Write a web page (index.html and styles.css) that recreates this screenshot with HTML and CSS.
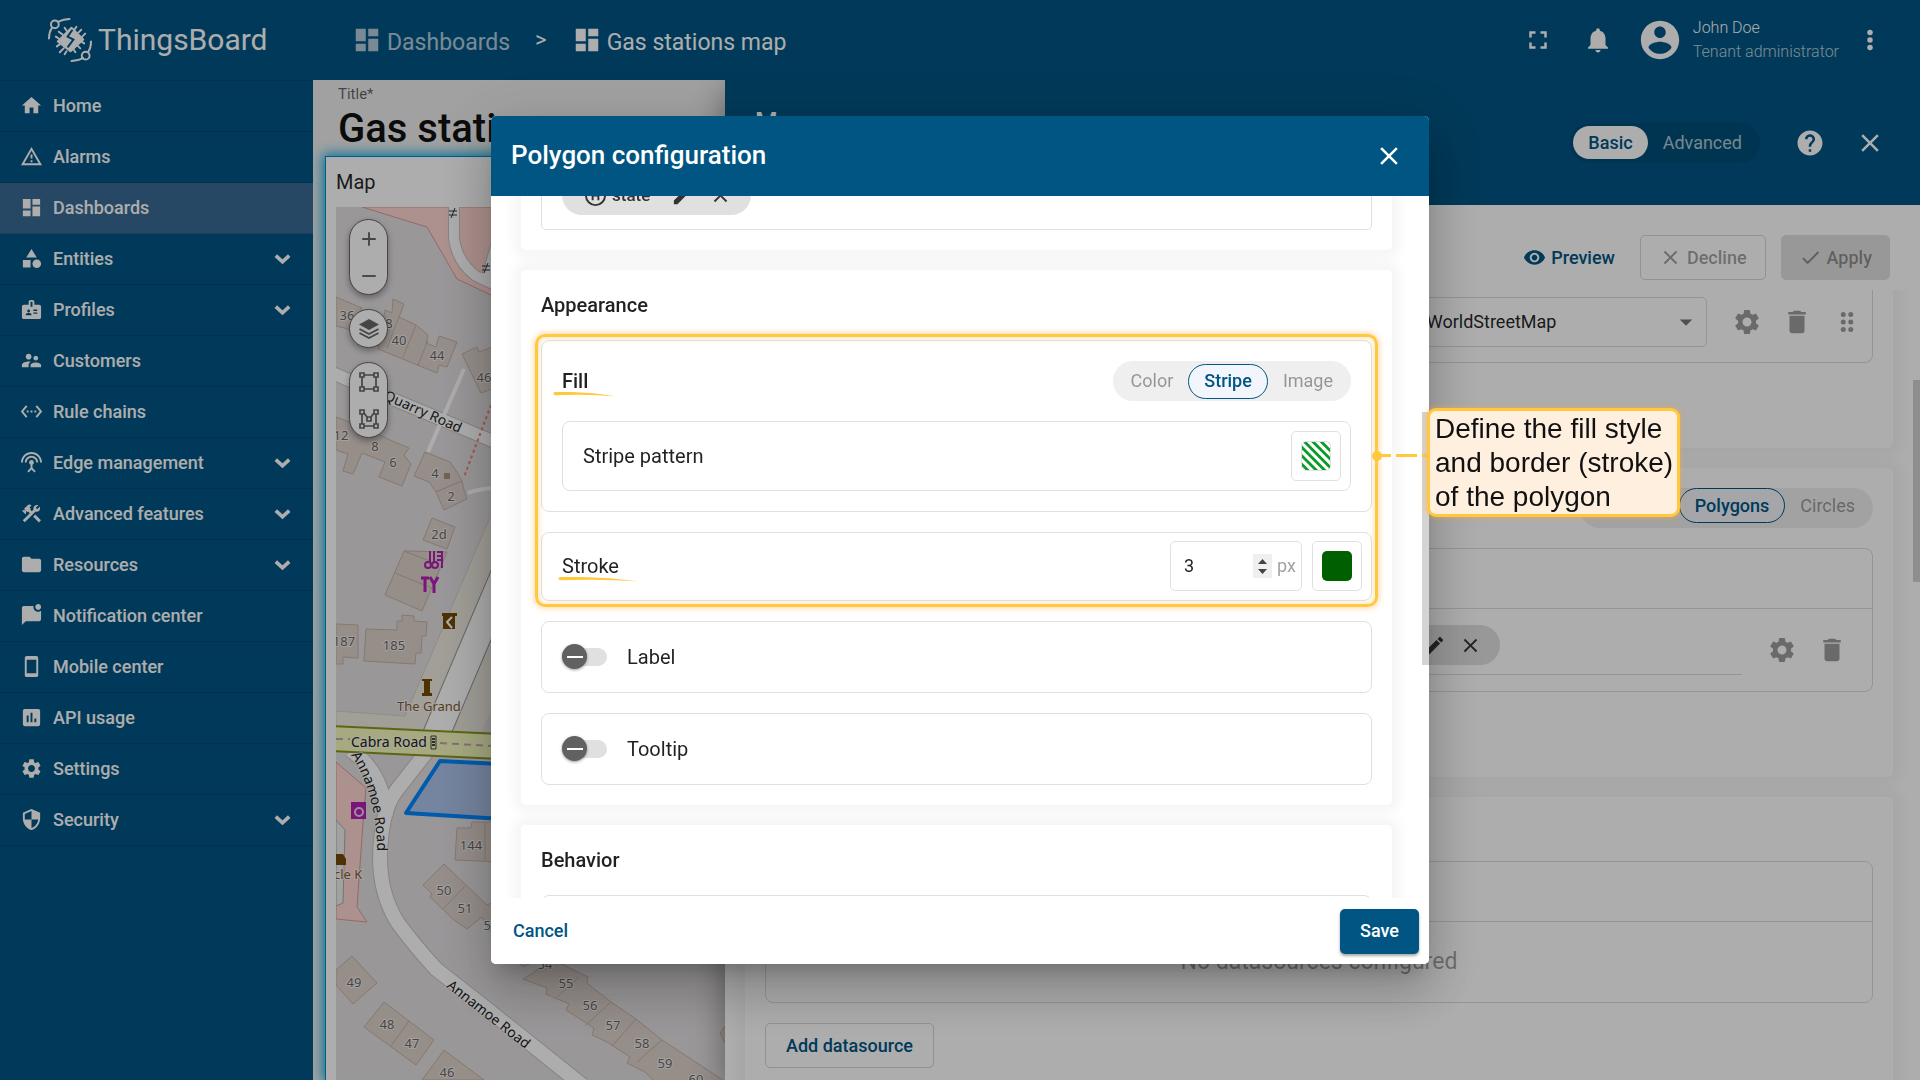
FILE: index.html
```html
<!DOCTYPE html>
<html lang="en">
<head>
<meta charset="utf-8">
<title>ThingsBoard | Gas stations map</title>
<link rel="stylesheet" href="styles.css">
</head>
<body>
<svg class="sprite" aria-hidden="true">
  <symbol id="i-home" viewBox="0 0 24 24"><path d="M10 20v-6h4v6h5v-8h3L12 3 2 12h3v8z"/></symbol>
  <symbol id="i-alarm" viewBox="0 0 24 24"><path d="M12 5.99L19.53 19H4.47L12 5.99M12 2L1 21h22L12 2zm1 14h-2v2h2v-2zm0-6h-2v4h2v-4z"/></symbol>
  <symbol id="i-dashboard" viewBox="0 0 24 24"><path d="M3 13h8V3H3v10zm0 8h8v-6H3v6zm10 0h8V11h-8v10zm0-18v6h8V3h-8z"/></symbol>
  <symbol id="i-entities" viewBox="0 0 24 24"><path d="M12 2l-5.500 9h11zM3 13.500h8v8H3z"/><circle cx="17.500" cy="17.500" r="4.500"/></symbol>
  <symbol id="i-badge" viewBox="0 0 24 24"><path d="M20 7h-5V4c0-1.100-.9-2-2-2h-2c-1.100 0-2 .9-2 2v3H4c-1.100 0-2 .9-2 2v11c0 1.100.9 2 2 2h16c1.100 0 2-.9 2-2V9c0-1.100-.9-2-2-2zM9 12c.83 0 1.500.67 1.500 1.500S9.830 15 9 15s-1.500-.67-1.500-1.500S8.170 12 9 12zm3 6H6v-.75c0-1 2-1.500 3-1.500s3 .5 3 1.500V18zm1-9h-2V4h2v5zm5 7.500h-4V15h4v1.500zm0-3h-4V12h4v1.500z"/></symbol>
  <symbol id="i-people" viewBox="0 0 24 24"><path d="M16.500 12c1.380 0 2.490-1.120 2.490-2.500S17.880 7 16.500 7C15.120 7 14 8.120 14 9.500s1.120 2.500 2.500 2.500zM9 11c1.660 0 2.990-1.340 2.990-3S10.660 5 9 5C7.340 5 6 6.340 6 8s1.340 3 3 3zm7.500 3c-1.830 0-5.500.92-5.500 2.750V19h11v-2.250c0-1.830-3.670-2.750-5.500-2.750zM9 13c-2.330 0-7 1.170-7 3.500V19h7v-2.250c0-.85.33-2.340 2.370-3.470C10.500 13.100 9.660 13 9 13z"/></symbol>
  <symbol id="i-chains" viewBox="0 0 24 24"><path d="M7.770 6.760L6.230 5.480.82 12l5.410 6.520 1.540-1.280L3.420 12l4.350-5.240zM7 13h2v-2H7v2zm10-2h-2v2h2v-2zm-6 2h2v-2h-2v2zm6.770-7.520l-1.540 1.280L20.580 12l-4.350 5.240 1.540 1.280L23.180 12l-5.410-6.520z"/></symbol>
  <symbol id="i-antenna" viewBox="0 0 24 24"><path d="M12 5c-3.870 0-7 3.130-7 7h2c0-2.760 2.240-5 5-5s5 2.240 5 5h2c0-3.870-3.130-7-7-7zm1 9.290c.88-.39 1.500-1.260 1.500-2.290 0-1.380-1.120-2.500-2.500-2.500S9.500 10.620 9.500 12c0 1.020.62 1.900 1.500 2.290v3.300L7.590 21 9 22.410l3-3 3 3L16.410 21 13 17.590v-3.300zM12 1C5.930 1 1 5.930 1 12h2c0-4.970 4.030-9 9-9s9 4.030 9 9h2c0-6.070-4.930-11-11-11z"/></symbol>
  <symbol id="i-tools" viewBox="0 0 24 24"><path d="M13.780 15.300l6 6 2.110-2.160-6-6-2.110 2.160zm3.720-5.160c-.39 0-.81-.05-1.140-.19L4.970 21.250 2.860 19.140l7.410-7.400L8.500 9.960l-.72.7-1.450-1.410v2.860l-.7.7-3.520-3.560.7-.7h2.810l-1.400-1.410 3.560-3.560c1.170-1.170 3.050-1.170 4.220 0L9.920 5.660l1.410 1.410-.7.7 1.790 1.780 1.830-1.880c-.14-.33-.19-.75-.19-1.140 0-1.930 1.550-3.520 3.490-3.520.61 0 1.120.14 1.590.42l-2.680 2.680 1.450 1.450 2.680-2.680c.28.47.42.98.42 1.590-.01 1.970-1.550 3.530-3.510 3.670z"/></symbol>
  <symbol id="i-folder" viewBox="0 0 24 24"><path d="M10 4H4c-1.100 0-2 .9-2 2v12c0 1.100.9 2 2 2h16c1.100 0 2-.9 2-2V8c0-1.100-.9-2-2-2h-8l-2-2z"/></symbol>
  <symbol id="i-chat" viewBox="0 0 24 24"><path d="M22 6.980V16c0 1.100-.9 2-2 2H6l-4 4V4c0-1.100.9-2 2-2h10.100c-.06.32-.1.66-.1 1 0 2.760 2.240 5 5 5 1.130 0 2.160-.39 3-1.020zM16 3c0 1.660 1.340 3 3 3s3-1.340 3-3-1.340-3-3-3-3 1.340-3 3z"/></symbol>
  <symbol id="i-phone" viewBox="0 0 24 24"><path d="M17 1H7c-1.100 0-2 .9-2 2v18c0 1.100.9 2 2 2h10c1.100 0 2-.9 2-2V3c0-1.100-.9-2-2-2zM17 19H7V5h10v14z"/></symbol>
  <symbol id="i-chart" viewBox="0 0 24 24"><path d="M19 3H5c-1.100 0-2 .9-2 2v14c0 1.100.9 2 2 2h14c1.100 0 2-.9 2-2V5c0-1.100-.9-2-2-2zM9 17H7v-7h2v7zm4 0h-2V7h2v10zm4 0h-2v-4h2v4z"/></symbol>
  <symbol id="i-gear" viewBox="0 0 24 24"><path d="M19.140 12.940c.04-.3.06-.61.06-.94 0-.32-.02-.64-.07-.94l2.030-1.580c.18-.14.23-.41.12-.61l-1.920-3.320c-.12-.22-.37-.29-.59-.22l-2.390.96c-.5-.38-1.030-.7-1.620-.94l-.36-2.540c-.04-.24-.24-.41-.48-.41h-3.840c-.24 0-.43.17-.47.41l-.36 2.540c-.59.24-1.130.57-1.620.94l-2.390-.96c-.22-.08-.47 0-.59.22L2.740 8.870c-.12.21-.08.47.12.61l2.030 1.580c-.05.3-.09.63-.09.94s.02.64.07.94l-2.030 1.580c-.18.14-.23.41-.12.61l1.920 3.320c.12.22.37.29.59.22l2.390-.96c.5.38 1.030.7 1.620.94l.36 2.540c.05.24.24.41.48.41h3.840c.24 0 .44-.17.47-.41l.36-2.540c.59-.24 1.130-.56 1.620-.94l2.390.96c.22.08.47 0 .59-.22l1.920-3.320c.12-.22.07-.47-.12-.61l-2.010-1.580zM12 15.600c-1.980 0-3.600-1.620-3.600-3.600s1.620-3.600 3.600-3.600 3.600 1.620 3.600 3.600-1.620 3.600-3.600 3.600z"/></symbol>
  <symbol id="i-shield" viewBox="0 0 24 24"><path d="M12 1L3 5v6c0 5.550 3.840 10.740 9 12 5.160-1.260 9-6.450 9-12V5l-9-4zm0 10.990h7c-.53 4.120-3.280 7.790-7 8.940V12H5V6.300l7-3.110v8.800z"/></symbol>
  <symbol id="i-chevron" viewBox="0 0 24 24"><path d="M5 9l7 6.500L19 9" fill="none" stroke="currentColor" stroke-width="3.800"/></symbol>
  <symbol id="i-fullscreen" viewBox="0 0 24 24"><path d="M7 14H5v5h5v-2H7v-3zm-2-4h2V7h3V5H5v5zm12 7h-3v2h5v-5h-2v3zM14 5v2h3v3h2V5h-5z"/></symbol>
  <symbol id="i-bell" viewBox="0 0 24 24"><path d="M12 22c1.100 0 2-.9 2-2h-4c0 1.100.89 2 2 2zm6-6v-5c0-3.070-1.640-5.640-4.500-6.320V4c0-.83-.67-1.500-1.500-1.500s-1.500.67-1.500 1.500v.68C7.630 5.360 6 7.920 6 11v5l-2 2v1h16v-1l-2-2z"/></symbol>
  <symbol id="i-account" viewBox="0 0 24 24"><path d="M12 2C6.480 2 2 6.480 2 12s4.480 10 10 10 10-4.480 10-10S17.520 2 12 2zm0 3c1.660 0 3 1.340 3 3s-1.340 3-3 3-3-1.340-3-3 1.340-3 3-3zm0 14.200c-2.500 0-4.710-1.280-6-3.220.03-1.990 4-3.080 6-3.080 1.990 0 5.970 1.090 6 3.080-1.290 1.940-3.500 3.220-6 3.220z"/></symbol>
  <symbol id="i-more" viewBox="0 0 24 24"><circle cx="12" cy="6" r="2.200"/><circle cx="12" cy="12" r="2.200"/><circle cx="12" cy="18" r="2.200"/></symbol>
  <symbol id="i-help" viewBox="0 0 24 24"><path d="M12 2C6.480 2 2 6.480 2 12s4.480 10 10 10 10-4.480 10-10S17.520 2 12 2zm1 17h-2v-2h2v2zm2.070-7.750l-.9.920C13.450 12.900 13 13.500 13 15h-2v-.5c0-1.100.45-2.100 1.170-2.830l1.240-1.260c.37-.36.59-.86.59-1.410 0-1.100-.9-2-2-2s-2 .9-2 2H8c0-2.210 1.790-4 4-4s4 1.790 4 4c0 .88-.36 1.680-.93 2.250z"/></symbol>
  <symbol id="i-close" viewBox="0 0 24 24"><path d="M19 6.410L17.590 5 12 10.590 6.410 5 5 6.410 10.590 12 5 17.590 6.410 19 12 13.410 17.590 19 19 17.590 13.410 12z"/></symbol>
  <symbol id="i-eye" viewBox="0 0 24 24"><path d="M12 4.500C7 4.500 2.730 7.610 1 12c1.730 4.390 6 7.500 11 7.500s9.270-3.110 11-7.500c-1.730-4.390-6-7.500-11-7.500zM12 17c-2.760 0-5-2.240-5-5s2.240-5 5-5 5 2.240 5 5-2.240 5-5 5zm0-8c-1.660 0-3 1.340-3 3s1.340 3 3 3 3-1.340 3-3-1.340-3-3-3z"/></symbol>
  <symbol id="i-check" viewBox="0 0 24 24"><path d="M9 16.170L4.830 12l-1.420 1.410L9 19 21 7l-1.410-1.410z"/></symbol>
  <symbol id="i-trash" viewBox="0 0 24 24"><path d="M6 19c0 1.100.9 2 2 2h8c1.100 0 2-.9 2-2V7H6v12zM19 4h-3.500l-1-1h-5l-1 1H5v2h14V4z"/></symbol>
  <symbol id="i-drag" viewBox="0 0 24 24"><circle cx="9" cy="6" r="2"/><circle cx="15" cy="6" r="2"/><circle cx="9" cy="12" r="2"/><circle cx="15" cy="12" r="2"/><circle cx="9" cy="18" r="2"/><circle cx="15" cy="18" r="2"/></symbol>
  <symbol id="i-edit" viewBox="0 0 24 24"><path d="M3 17.250V21h3.750L17.810 9.940l-3.750-3.750L3 17.250zM20.710 7.040c.39-.39.39-1.020 0-1.410l-2.340-2.340c-.39-.39-1.020-.39-1.410 0l-1.830 1.830 3.750 3.750 1.830-1.830z"/></symbol>
  <symbol id="i-layers" viewBox="0 0 24 24"><path d="M12 2l10 5.500-10 5.500L2 7.500z"/><path d="M2.500 12l9.500 5 9.500-5M2.500 16l9.500 5 9.500-5" fill="none" stroke="currentColor" stroke-width="1.800"/></symbol>
  <symbol id="i-rect" viewBox="0 0 24 24"><path d="M5 7v10M19 7v10M7 5h10M7 19h10M3 3h4v4H3zM17 3h4v4h-4zM3 17h4v4H3zM17 17h4v4h-4z" fill="none" stroke="currentColor" stroke-width="1.700"/></symbol>
  <symbol id="i-poly" viewBox="0 0 24 24"><path d="M5 7v10M19 7v10M7 19h10M7 6l3 4M17 6l-3 4M3 3h4v4H3zM17 3h4v4h-4zM3 17h4v4H3zM17 17h4v4h-4zM10 10h4v4h-4z" fill="none" stroke="currentColor" stroke-width="1.700"/></symbol>
  <symbol id="i-plus" viewBox="0 0 24 24"><path d="M12 3v18M3 12h18" fill="none" stroke="currentColor" stroke-width="2.500"/></symbol>
  <symbol id="i-minus" viewBox="0 0 24 24"><path d="M3 12h18" fill="none" stroke="currentColor" stroke-width="2.500"/></symbol>
  <symbol id="i-caret" viewBox="0 0 24 24"><path d="M7 10l5 5 5-5z"/></symbol>
  <symbol id="i-function" viewBox="0 0 24 24"><circle cx="12" cy="12" r="10" fill="none" stroke="currentColor" stroke-width="2"/><path d="M9 7v10M15 7v10M9 12h6" fill="none" stroke="currentColor" stroke-width="2"/></symbol>
  <symbol id="i-logo" viewBox="0 0 46 46">
    <g fill="none" stroke="currentColor" stroke-width="2" stroke-linecap="round">
      <path d="M1 21c0-4 1-8 3-11M10 4c4-2 8-3 12-3M44 24c0 4-1 8-3 11M36 41c-4 2-8 3-12 3"/>
      <circle cx="7" cy="6.500" r="4"/><circle cx="38.500" cy="38.500" r="4"/>
      <path d="M27 12l2-3M31 15l3-3M35 19l3-3M34 24l3 2M30 28l3 3M26 32l2 3M19 13l-2-3M15 17l-4-3M11 21l-3-2M12 27l-3 2M16 31l-4 4M19 34l-2 3"/>
    </g>
    <path d="M24 10l12 12-13 12L10 24z" stroke="currentColor" stroke-width="2" stroke-linejoin="round"/>
    <path d="M25 12l-5 7 6 3-6 8" fill="none" stroke="#005583" stroke-width="2"/>
  </symbol>
</svg>

<div class="app">
  <nav class="sidebar" aria-label="Main menu">
    <a class="brand" href="#"><svg class="brand-mark"><use href="#i-logo"/></svg><span>ThingsBoard</span></a>
    <ul class="menu">
      <li><a href="#"><svg class="icon"><use href="#i-home"/></svg><span>Home</span></a></li>
      <li><a href="#"><svg class="icon"><use href="#i-alarm"/></svg><span>Alarms</span></a></li>
      <li><a class="active" href="#"><svg class="icon"><use href="#i-dashboard"/></svg><span>Dashboards</span></a></li>
      <li><a href="#"><svg class="icon"><use href="#i-entities"/></svg><span>Entities</span><svg class="chevron"><use href="#i-chevron"/></svg></a></li>
      <li><a href="#"><svg class="icon"><use href="#i-badge"/></svg><span>Profiles</span><svg class="chevron"><use href="#i-chevron"/></svg></a></li>
      <li><a href="#"><svg class="icon"><use href="#i-people"/></svg><span>Customers</span></a></li>
      <li><a href="#"><svg class="icon"><use href="#i-chains"/></svg><span>Rule chains</span></a></li>
      <li><a href="#"><svg class="icon"><use href="#i-antenna"/></svg><span>Edge management</span><svg class="chevron"><use href="#i-chevron"/></svg></a></li>
      <li><a href="#"><svg class="icon"><use href="#i-tools"/></svg><span>Advanced features</span><svg class="chevron"><use href="#i-chevron"/></svg></a></li>
      <li><a href="#"><svg class="icon"><use href="#i-folder"/></svg><span>Resources</span><svg class="chevron"><use href="#i-chevron"/></svg></a></li>
      <li><a href="#"><svg class="icon"><use href="#i-chat"/></svg><span>Notification center</span></a></li>
      <li><a href="#"><svg class="icon"><use href="#i-phone"/></svg><span>Mobile center</span></a></li>
      <li><a href="#"><svg class="icon"><use href="#i-chart"/></svg><span>API usage</span></a></li>
      <li><a href="#"><svg class="icon"><use href="#i-gear"/></svg><span>Settings</span></a></li>
      <li><a href="#"><svg class="icon"><use href="#i-shield"/></svg><span>Security</span><svg class="chevron"><use href="#i-chevron"/></svg></a></li>
    </ul>
  </nav>

  <div class="main">
    <header class="topbar">
      <div class="crumbs">
        <a class="crumb parent" href="#"><svg class="icon-l"><use href="#i-dashboard"/></svg><span>Dashboards</span></a>
        <span class="crumb-sep">&gt;</span>
        <a class="crumb" href="#"><svg class="icon-l"><use href="#i-dashboard"/></svg><span>Gas stations map</span></a>
      </div>
      <div class="top-actions">
        <button class="icon-btn" aria-label="Full screen"><svg class="icon-l"><use href="#i-fullscreen"/></svg></button>
        <button class="icon-btn" aria-label="Notifications"><svg class="icon-l"><use href="#i-bell"/></svg></button>
        <div class="user">
          <svg class="avatar"><use href="#i-account"/></svg>
          <div class="user-text"><span>John Doe</span><span class="role">Tenant administrator</span></div>
        </div>
        <button class="icon-btn" aria-label="More"><svg class="icon-l"><use href="#i-more"/></svg></button>
      </div>
    </header>

    <div class="workspace">
      <section class="dashboard">
        <div class="title-bar">
          <label for="dash-title">Title*</label>
          <input id="dash-title" value="Gas stations map">
        </div>
        <div class="widget">
          <h2>Map</h2>
          <div class="map">
            <svg class="map-canvas">
              <g transform="translate(-336 -207)">
                <path class="retail" d="M362 207l65 20 30 52 34 16h40v-88z"/>
                <path class="road-case" stroke-width="12" d="M454 200v38q3 24 22 38l34 16M502 225l-16 56"/>
                <path class="road" stroke-width="10" d="M454 200v38q3 24 22 38l34 16M502 225l-16 56"/>
                <path class="gate" d="M449 211h8M449 215h8M455 208l-4 10M482 266h8M482 270h8M488 263l-4 10"/>
                <path class="verge" d="M491 515l-86 201-69-5v40h170v-240z"/>
                <path class="grey-case" stroke-width="28" d="M506 570l-70 165"/>
                <path class="road" stroke-width="26" d="M506 570l-70 165"/>
                <path class="ground" d="M500 690l-20 45h30z"/>
                <g class="building">
                  <path d="M336 297l26 11-10 22-16-4z"/>
                  <path d="M393 299l11 5-5 13 17 8 12 10-2 8 10 4 3-11 18 6-10 25-8-2-2 8-59-24 7-39 7 3z"/>
                  <path d="M399 317l-12 31M416 325l-13 32M428 340l-10 25"/>
                  <path d="M462 354l15-7 2 5 21-8v42l-19 7z"/>
                  <path d="M336 417l29 11 25 12 19 8-5 7 7 9-9 22-23-9 6-15-23-9-9 21-10-3 5-17-12-4z"/>
                  <path d="M425 452l25 10 7 10 5 9-26 11-7-10-15-6z"/>
                  <path d="M462 481l-26 11 8 18 23-11-3-9z"/>
                  <path d="M432 518l23 9-8 22-24-9z"/>
                  <path d="M404 551l43 1-25 59-37-16zM395 573l37 15M404 551l36 14"/>
                  <path d="M336 624l22 1v33l-15-1v7h-7z"/>
                  <path d="M366 629l31 1v-9h5v-6l12 1v5l13 1-1 14h-4l-1 17h-5l-1 11-51-3z"/>
                  <path d="M472 822h30v40l-47-2 2-32h14zM485 822v38"/>
                  <path d="M444 864l43 41 13-6 40 60-17 8-33-36-8-14-15 12-13-9-24-23 2-3-9-9zM465 886l-22 23"/>
                  <path d="M553 960l35 17-1 6 24 19 25 17 26 21 26 17 35 23v10h-60l-18-18-18-9 3-6-23-15-15-7 2-7-28-18 3-6-23-10 1-6-24-9zM579 977l-22 20M611 1002l-26 24M636 1019l-24 27M662 1040l-25 22"/>
                  <path d="M720 1033l6-8v20z"/>
                  <path d="M352 956l25 27-24 21-17-19v-15z"/>
                  <path d="M384 1002l50 38-18 25-52-38zM409 1021l-18 25"/>
                  <path d="M444 1050l40 30h-62z"/>
                </g>
                <path class="road-case" stroke-width="14" d="M330 372l60 26 110 46"/>
                <path class="road" stroke-width="12" d="M330 372l60 26 110 46"/>
                <path class="road" stroke-width="4" d="M464 369l-36 83M468 493q10-4 25-5M428 452l6-14"/>
                <path class="foot" d="M491 405l-27 72"/>
                <path d="M444 473h6v6h-6z" fill="#a98f80"/>
                <path class="retail" d="M336 762l30 26-3 35-6 84 10 15-31-3z"/>
                <path class="plaza" d="M336 820l9 10-2 73-7 3z"/>
                <path class="road-case" stroke-width="16" d="M350 750q32 20 36 66M432 745l-36 46q-15 20-16 66 0 38 18 66 16 22 38 46l46 36 100 80"/>
                <path class="road" stroke-width="14" d="M350 750q32 20 36 66M432 745l-36 46q-15 20-16 66 0 38 18 66 16 22 38 46l46 36 100 80"/>
                <path class="cabra" d="M330 726l170 8v25l-170-8z"/>
                <path class="cabra-dash" d="M336 739h14M440 743l51 3"/>
                <path class="area" d="M440 761l80 4v55l-114-7z"/>
                <g class="shop">
                  <path d="M430 551v11M434 551v11M437 552h6M437 556h6M437 560h6M442 551v17"/>
                  <circle cx="428" cy="565" r="3"/><circle cx="435" cy="565" r="3"/>
                  <path d="M421 578h8M425 578v14" stroke-width="3"/><path d="M434 584v9M430 577l4 7 4-7" stroke-width="3"/>
                </g>
                <path d="M351 802h15v17h-15z" fill="#b41fb4"/><circle cx="359" cy="812" r="4" fill="none" stroke="#eecdee" stroke-width="2"/>
                <path d="M442 613h15v3h-2v13h-12v-13h-1zM422 679h10v2h-2v12h2v3h-10v-3h2v-12h-2zM336 854h7l3 5v6h-10z" fill="#734a08"/>
                <path d="M452 617l-5 5 5 6" fill="none" stroke="#fff" stroke-width="2"/>
                <g class="num">
                  <text x="347" y="320">36</text><text x="389" y="328">8</text><text x="399" y="345">40</text><text x="437" y="360">44</text><text x="484" y="382">46</text>
                  <text x="341" y="440">12</text><text x="375" y="451">8</text><text x="393" y="467">6</text><text x="435" y="478">4</text><text x="451" y="501">2</text><text x="439" y="539">2d</text>
                  <text x="344" y="646">187</text><text x="394" y="650">185</text><text x="471" y="850">144</text><text x="444" y="895">50</text><text x="465" y="913">51</text><text x="491" y="930">52</text>
                  <text x="545" y="969">54</text><text x="566" y="988">55</text><text x="590" y="1010">56</text><text x="613" y="1030">57</text><text x="642" y="1048">58</text><text x="665" y="1068">59</text><text x="696" y="1084">60</text>
                  <text x="354" y="987">49</text><text x="387" y="1029">48</text><text x="412" y="1048">47</text><text x="447" y="1077">46</text>
                </g>
                <g class="street">
                  <text transform="translate(383 399) rotate(24)">Quarry Road</text>
                  <text x="351" y="747">Cabra Road</text>
                  <path id="annamoe-a" d="M351 755Q374 790 377 842V880" fill="none"/>
                  <text><textPath href="#annamoe-a">Annamoe Road</textPath></text>
                  <text transform="translate(446 987) rotate(38)">Annamoe Road</text>
                </g>
                <g class="poi"><text x="397" y="711">The Grand</text><text x="334" y="879">cle K</text></g>
                <path d="M431 736h5v13h-5z" fill="none" stroke="#444"/><path d="M432 739h3M432 742h3M432 745h3" stroke="#444" stroke-width="2"/>
              </g>
            </svg>
            <div class="map-tools">
              <div class="map-group"><button aria-label="Zoom in"><svg><use href="#i-plus"/></svg></button><button aria-label="Zoom out"><svg><use href="#i-minus"/></svg></button></div>
              <div class="map-group"><button aria-label="Layers"><svg class="wide"><use href="#i-layers"/></svg></button></div>
              <div class="map-group"><button aria-label="Draw rectangle"><svg class="wide"><use href="#i-rect"/></svg></button><button aria-label="Draw polygon"><svg class="wide"><use href="#i-poly"/></svg></button></div>
            </div>
          </div>
        </div>
      </section>

      <aside class="editor">
        <header class="editor-head">
          <div class="editor-title"><h2>Map</h2><p>Maps</p></div>
          <fieldset class="seg seg-dark">
            <label class="on"><input type="radio" name="mode" checked>Basic</label>
            <label><input type="radio" name="mode">Advanced</label>
          </fieldset>
          <button class="icon-btn" aria-label="Help"><svg class="icon-l"><use href="#i-help"/></svg></button>
          <button class="icon-btn" aria-label="Close editor"><svg class="icon-l"><use href="#i-close"/></svg></button>
        </header>
        <div class="editor-actions">
          <button class="btn text-btn"><svg class="icon"><use href="#i-eye"/></svg>Preview</button>
          <button class="btn outlined muted" disabled><svg class="icon"><use href="#i-close"/></svg>Decline</button>
          <button class="btn filled muted" disabled><svg class="icon"><use href="#i-check"/></svg>Apply</button>
        </div>
        <div class="editor-body">
          <section class="card card-layers">
            <div class="layer-row">
              <div class="select"><select aria-label="Layer"><option>Esri.WorldStreetMap</option></select><svg class="icon-l"><use href="#i-caret"/></svg></div>
              <button class="icon-btn" aria-label="Layer settings"><svg class="icon-l"><use href="#i-gear"/></svg></button>
              <button class="icon-btn" aria-label="Delete layer"><svg class="icon-l"><use href="#i-trash"/></svg></button>
              <button class="icon-btn" aria-label="Reorder layer"><svg class="icon-l"><use href="#i-drag"/></svg></button>
            </div>
          </section>
          <section class="card card-overlays">
            <fieldset class="seg">
              <label><input type="radio" name="overlay">Markers</label>
              <label class="on"><input type="radio" name="overlay" checked>Polygons</label>
              <label><input type="radio" name="overlay">Circles</label>
            </fieldset>
            <div class="grid-box">
              <div class="grid-head"></div>
              <div class="overlay-row">
                <div class="key-field">
                  <span class="chip"><span>perimeter</span><svg class="icon"><use href="#i-edit"/></svg><svg class="icon"><use href="#i-close"/></svg></span>
                </div>
                <button class="icon-btn" aria-label="Polygon settings"><svg class="icon-l"><use href="#i-gear"/></svg></button>
                <button class="icon-btn" aria-label="Delete polygon"><svg class="icon-l"><use href="#i-trash"/></svg></button>
              </div>
            </div>
          </section>
          <section class="card card-sources">
            <div class="grid-box">
              <div class="grid-head"></div>
              <p class="empty">No datasources configured</p>
            </div>
            <button class="btn outlined">Add datasource</button>
          </section>
          <div class="editor-thumb"></div>
        </div>
      </aside>
    </div>
  </div>
</div>

<div class="backdrop">
  <div class="dialog" role="dialog" aria-labelledby="dlg-title">
    <header class="dialog-head">
      <h1 id="dlg-title">Polygon configuration</h1>
      <button class="icon-btn" aria-label="Close"><svg class="icon-l"><use href="#i-close"/></svg></button>
    </header>
    <div class="dialog-body">
      <section class="card card-key">
        <div class="key-box"><span class="chip"><svg class="icon"><use href="#i-function"/></svg><span>state</span><svg class="icon"><use href="#i-edit"/></svg><svg class="icon"><use href="#i-close"/></svg></span></div>
      </section>
      <section class="card">
        <h3>Appearance</h3>
        <div class="marked">
          <div class="box fill-box">
            <div class="row">
              <h4 class="underlined">Fill<svg class="swoosh short" viewBox="0 0 80 6" preserveAspectRatio="none"><path d="M2 0Q40-1 80 5Q40 2 2 4Q-1 2 2 0z"/></svg></h4>
              <fieldset class="seg">
                <label><input type="radio" name="fill">Color</label>
                <label class="on"><input type="radio" name="fill" checked>Stripe</label>
                <label><input type="radio" name="fill">Image</label>
              </fieldset>
            </div>
            <div class="box row inner-row">
              <span>Stripe pattern</span>
              <button class="swatch-btn" aria-label="Stripe pattern"><svg class="stripes" viewBox="0 0 30 30"><path d="M-2 22l12 12M-2 13l21 21M-2 4l30 30M-2-5l36 36M5-7l28 28M14-7l20 20M23-7l12 12"/></svg></button>
            </div>
          </div>
          <div class="box row stroke-row">
            <label class="underlined" for="stroke-width">Stroke<svg class="swoosh" viewBox="0 0 80 6" preserveAspectRatio="none"><path d="M2 0Q40-1 80 5Q40 2 2 4Q-1 2 2 0z"/></svg></label>
            <div class="number">
              <input id="stroke-width" type="number" value="3">
              <svg class="spinner" viewBox="0 0 19 24"><path d="M5 10l4.500-5 4.500 5zM5 15l4.500 5 4.500-5z"/></svg>
              <span>px</span>
            </div>
            <button class="swatch-btn" aria-label="Stroke color"><span class="solid"></span></button>
          </div>
        </div>
        <label class="box row switch-row"><input type="checkbox" role="switch">Label</label>
        <label class="box row switch-row"><input type="checkbox" role="switch">Tooltip</label>
      </section>
      <section class="card">
        <h3>Behavior</h3>
        <div class="box behavior-box"></div>
      </section>
    </div>
    <footer class="dialog-foot">
      <button class="btn">Cancel</button>
      <button class="btn primary">Save</button>
    </footer>
    <div class="dialog-thumb"></div>
    <svg class="leader" viewBox="0 0 60 12"><circle cx="6" cy="6" r="5"/><path d="M9 4h11v3H9zM25 4h21v3H25zM51 4h9v3h-9z"/></svg>
    <div class="callout">Define the fill style<br>and border (stroke)<br>of the polygon</div>
  </div>
</div>
</body>
</html>
```
FILE: styles.css
```css
:root {
  --primary: #005583;
  --line: #e0e0e0;
  --mark: #ffc83d;
  --ink: rgba(0, 0, 0, 0.87);
}

* { box-sizing: border-box; }

body {
  margin: 0;
  height: 100vh;
  overflow: hidden;
  font: 400 16px/24px Roboto, "Liberation Sans", sans-serif;
  color: var(--ink);
}

h1, h2, h3, h4, p, ul, fieldset { margin: 0; padding: 0; border: 0; }
ul { list-style: none; }
a { color: inherit; text-decoration: none; }
button, input, select { font: inherit; color: inherit; }
svg { fill: currentColor; flex: none; }

.sprite { position: absolute; width: 0; height: 0; }
.icon { width: 23px; height: 23px; }
.icon-l { width: 30px; height: 30px; display: block; }

.icon-btn {
  width: 50px;
  height: 50px;
  padding: 10px;
  border: 0;
  background: none;
  flex: none;
}

.app { display: flex; height: 100vh; background: #fff; }

/* Sidebar */
.sidebar { width: 313px; flex: none; background: var(--primary); color: #fff; }

.brand {
  display: flex;
  align-items: center;
  gap: 5px;
  height: 80px;
  padding-left: 48px;
  font-size: 30px;
  line-height: 40px;
}
.brand-mark { width: 45px; height: 45px; }

.menu { border-top: 1px solid rgba(0, 0, 0, 0.12); }
.menu a {
  display: flex;
  align-items: center;
  gap: 10px;
  height: 51px;
  padding: 0 19px 1px 20px;
  border-bottom: 1px solid rgba(0, 0, 0, 0.12);
  font-size: 18px;
  font-weight: 500;
}
.menu .active { background: #386a95; }
.chevron { width: 23px; height: 23px; margin-left: auto; }

/* Top bar */
.main { flex: 1; min-width: 0; display: flex; flex-direction: column; }
.topbar {
  display: flex;
  align-items: center;
  justify-content: space-between;
  height: 80px;
  flex: none;
  padding: 0 25px 0 39px;
  background: var(--primary);
  color: #fff;
}
.crumbs { display: flex; align-items: center; gap: 25px; font-size: 23px; line-height: 28px; }
.crumb { display: flex; align-items: center; gap: 5px; }
.crumb span { padding-top: 5px; }
.crumb-sep { font-size: 22px; }
.parent { opacity: 0.7; }
.top-actions { display: flex; align-items: center; gap: 10px; }
.user { display: flex; align-items: center; gap: 10px; margin: 0 -4px 0 4px; }
.avatar { width: 46px; height: 46px; }
.user-text { display: flex; flex-direction: column; font-weight: 300; font-size: 16px; }
.role { opacity: 0.7; }

/* Dashboard */
.workspace {
  flex: 1;
  min-height: 0;
  display: grid;
  grid-template-columns: minmax(0, 412fr) minmax(0, 1195fr);
}
.dashboard {
  display: flex;
  flex-direction: column;
  min-height: 0;
  background: #eee;
  overflow: hidden;
}
.title-bar { height: 76px; flex: none; padding: 4px 0 0 25px; display: flex; flex-direction: column; }
.title-bar label { font-size: 15px; line-height: 20px; color: rgba(0, 0, 0, 0.6); }
.title-bar input {
  width: 100%;
  height: 48px;
  padding: 0;
  border: 0;
  background: none;
  font-size: 40px;
  font-weight: 500;
  color: #111;
}
.widget {
  flex: 1;
  min-height: 0;
  display: flex;
  flex-direction: column;
  margin-left: 12px;
  padding-left: 10px;
  border: 1px solid #0288d1;
  border-width: 1px 0 0 1px;
  background: #fff;
  box-shadow: 0 0 12px 2px #00a8e0;
}
.widget h2 { font-size: 20px; line-height: 50px; font-weight: 400; }
.map { flex: 1; min-height: 0; display: grid; background: #e2dfe1; overflow: hidden; }
.map-canvas, .map-tools { grid-area: 1 / 1; }
.map-canvas { width: 100%; height: 100%; overflow: hidden; display: block; }
.map-canvas path { stroke-linejoin: round; }
.retail { fill: #ffd6d1; stroke: #d99c95; }
.verge { fill: #eeeae0; stroke: #d6d0c4; }
.ground { fill: #e2dfe1; }
.plaza { fill: #eee; stroke: #aaa; }
.building { fill: #dcd1cb; stroke: #c6b2a6; stroke-width: 1; }
.road, .road-case, .grey-case { fill: none; }
.road { stroke: #fff; }
.road-case { stroke: #c6c2c4; }
.grey-case { stroke: #999; }
.gate { fill: none; stroke: #333; stroke-width: 1; }
.foot { fill: none; stroke: #fa8072; stroke-width: 2; stroke-dasharray: 3 3; }
.cabra { fill: #f7fabf; stroke: #8a9620; stroke-width: 2; }
.cabra-dash { fill: none; stroke: #c3a5b5; stroke-width: 2; stroke-dasharray: 7 5; }
.area { fill: rgba(51, 136, 255, 0.3); stroke: #0086ff; stroke-width: 4; }
.shop { fill: none; stroke: #b41fb4; stroke-width: 2; }
.num text, .street text, .poi text {
  font-family: "Noto Sans", sans-serif;
  paint-order: stroke;
  stroke: rgba(255, 255, 255, 0.6);
  stroke-width: 2px;
}
.num text { font-size: 13px; fill: #6b6665; text-anchor: middle; }
.street text { font-size: 14px; fill: #222; }
.poi text { font-size: 13px; fill: #845a30; }

.map-tools { display: flex; flex-direction: column; gap: 14px; padding: 12px 13px; align-self: start; justify-self: start; z-index: 1; }
.map-group {
  display: flex;
  flex-direction: column;
  width: 39px;
  border: 1px solid #666;
  border-radius: 20px;
  background: #fff;
  box-shadow: 0 3px 6px rgba(0, 0, 0, 0.35);
}
.map-group button {
  display: grid;
  place-items: center;
  height: 37px;
  padding: 0;
  border: 0;
  background: none;
  color: #666;
}
.map-group svg { width: 18px; height: 18px; }
.map-group .wide { width: 24px; height: 24px; }

/* Widget editor */
.editor {
  display: flex;
  flex-direction: column;
  min-height: 0;
  background: #fff;
  box-shadow: 0 10px 30px rgba(0, 0, 0, 0.4);
  clip-path: inset(0 0 0 -40px);
}
.editor-head {
  display: flex;
  align-items: center;
  gap: 10px;
  height: 125px;
  flex: none;
  padding: 0 25px 0 30px;
  background: var(--primary);
  color: #fff;
}
.editor-title { flex: 1; }
.editor-title h2 { font-size: 26px; line-height: 32px; font-weight: 500; }
.editor-title p { line-height: 42px; }

.seg {
  display: flex;
  align-items: center;
  height: 40px;
  padding: 0 3px;
  border-radius: 20px;
  background: #efefef;
  color: rgba(0, 0, 0, 0.38);
  font-size: 18px;
}
.seg label {
  display: flex;
  align-items: center;
  height: 35px;
  padding: 0 15px;
  border-radius: 18px;
}
.seg input { position: absolute; opacity: 0; width: 1px; height: 1px; margin: 0; }
.seg .on {
  border: 1px solid var(--primary);
  background: #f2f5fb;
  color: var(--primary);
  font-weight: 500;
}
.seg-dark { background: rgba(0, 0, 0, 0.08); color: rgba(255, 255, 255, 0.7); margin-right: 15px; }
.seg-dark .on { height: 33px; border: 0; background: #fff; }

.editor-actions {
  display: flex;
  justify-content: flex-end;
  align-items: flex-end;
  gap: 15px;
  height: 75px;
  flex: none;
  padding-right: 30px;
}
.btn {
  display: inline-flex;
  align-items: center;
  gap: 5px;
  height: 45px;
  padding: 0 20px;
  border: 0;
  border-radius: 5px;
  background: none;
  color: var(--primary);
  font-size: 18px;
  font-weight: 500;
}
.outlined { border: 1px solid rgba(0, 0, 0, 0.16); }
.filled { background: rgba(0, 0, 0, 0.12); }
.primary { background: var(--primary); color: #fff; box-shadow: 0 2px 3px rgba(0, 0, 0, 0.35); }
.muted { color: rgba(0, 0, 0, 0.38); }
.editor-actions .btn { padding: 0 18px; }
.editor-actions .text-btn { padding: 0 10px; }

.editor-body {
  flex: 1;
  min-height: 0;
  display: flex;
  flex-direction: column;
  gap: 20px;
  margin-top: 10px;
  padding: 0 27px 0 20px;
  overflow: hidden;
  position: relative;
}
.card {
  flex: none;
  padding: 20px;
  border-radius: 5px;
  background: #fff;
  box-shadow: 0 0 12px 8px rgba(11, 17, 51, 0.04);
}
.card-layers { padding: 0 20px 85px; border-radius: 0 0 5px 5px; }
.layer-row {
  display: flex;
  align-items: center;
  height: 73px;
  padding: 0 0 9px 20px;
  border: 1px solid #dcdcdc;
  border-top: 0;
  border-radius: 0 0 8px 8px;
  color: #9c9c9c;
}
.select { flex: 1; display: flex; align-items: center; height: 50px; margin-right: 15px; border: 1px solid #dcdcdc; border-radius: 5px; color: #757575; }
.select select {
  flex: 1;
  height: 100%;
  padding-left: 605px;
  border: 0;
  background: none;
  appearance: none;
  font-size: 18px;
  color: var(--ink);
}
.select svg { margin-right: 5px; }

.card-overlays { height: 309px; display: flex; flex-direction: column; align-items: stretch; gap: 20px; }
.card-overlays .seg { align-self: flex-end; }
.grid-box { border: 1px solid #dcdcdc; border-radius: 8px; }
.grid-head { height: 60px; border-bottom: 1px solid #dcdcdc; }
.overlay-row { display: flex; align-items: center; height: 82px; padding-right: 15px; color: #9c9c9c; }
.key-field {
  flex: 1;
  display: flex;
  justify-content: flex-start;
  height: 50px;
  margin: 0 15px 0 10px;
  padding-left: 500px;
  border-bottom: 1px solid #dcdcdc;
}
.chip {
  display: flex;
  align-items: center;
  gap: 6px;
  height: 40px;
  padding: 0 20px;
  border-radius: 20px;
  background: #e0e0e0;
  color: #333;
  font-size: 17px;
  font-weight: 500;
}
.key-field .chip { width: 224px; padding-right: 18px; gap: 13px; }
.chip span { flex: 1; }

.card-sources { padding-top: 64px; display: flex; flex-direction: column; gap: 20px; align-items: flex-start; }
.card-sources .grid-box { align-self: stretch; }
.empty { padding: 26px 0; text-align: center; font-size: 23px; line-height: 28px; color: rgba(0, 0, 0, 0.38); }
.editor-thumb { position: absolute; right: 0; top: 90px; width: 7px; height: 202px; background: #d2d2d2; }

/* Dialog */
.backdrop {
  position: fixed;
  inset: 0;
  z-index: 10;
  display: grid;
  place-items: center;
  background: rgba(0, 0, 0, 0.32);
}
.dialog {
  position: relative;
  display: flex;
  flex-direction: column;
  width: calc(100% - 80px);
  max-width: 938px;
  height: calc(100vh - 232px);
  border-radius: 5px;
  background: #fff;
  box-shadow: 0 14px 19px -9px rgba(0, 0, 0, 0.2), 0 30px 48px 4px rgba(0, 0, 0, 0.14), 0 11px 58px 10px rgba(0, 0, 0, 0.12);
}
.dialog-head {
  display: flex;
  align-items: center;
  justify-content: space-between;
  height: 80px;
  flex: none;
  padding: 0 15px 0 20px;
  border-radius: 5px 5px 0 0;
  background: var(--primary);
  color: #fff;
}
.dialog-head h1 { font-size: 26px; line-height: 32px; padding-bottom: 2px; font-weight: 500; }
.dialog-body {
  flex: 1;
  min-height: 0;
  display: flex;
  flex-direction: column;
  gap: 20px;
  padding: 0 37px 0 30px;
  overflow: hidden;
}
.dialog-body h3 { margin-bottom: 20px; font-size: 20px; line-height: 30px; font-weight: 500; }
.card-key { padding-top: 0; border-radius: 0 0 5px 5px; }
.key-box {
  display: flex;
  align-items: flex-end;
  height: 34px;
  padding: 0 20px 14px;
  border: 1px solid var(--line);
  border-top: 0;
  border-radius: 0 0 5px 5px;
}
.key-box .chip { width: 189px; padding: 0 19px 0 22px; gap: 5px; }
.key-box .chip .icon:nth-of-type(n + 2) { margin-left: 10px; }

.box { border: 1px solid var(--line); border-radius: 8px; }
.row { display: flex; align-items: center; font-size: 20px; line-height: 24px; }
.marked { display: flex; flex-direction: column; gap: 20px; position: relative; }
.marked::after {
  content: "";
  position: absolute;
  inset: -6px;
  border: 3px solid var(--mark);
  border-radius: 10px;
  box-shadow: 0 0 5px 2px rgba(255, 170, 60, 0.35), inset 0 0 4px 2px rgba(255, 190, 110, 0.35);
  pointer-events: none;
}
.fill-box { display: flex; flex-direction: column; gap: 20px; padding: 20px; }
.fill-box > .row { justify-content: space-between; }
.fill-box h4 { font-size: 20px; font-weight: 500; }
.underlined { position: relative; }
.swoosh { position: absolute; left: -4px; top: 23px; width: 80px; height: 5px; fill: var(--mark); }
.swoosh.short { left: -9px; width: 63px; }
.inner-row { height: 70px; padding: 0 9px 0 20px; }
.swatch-btn {
  width: 50px;
  height: 50px;
  padding: 9px;
  border: 1px solid var(--line);
  border-radius: 5px;
  background: #fff;
  flex: none;
}
.stripes { display: block; width: 30px; height: 30px; border: 1px solid var(--line); border-radius: 5px; }
.stripes path { fill: none; stroke: #0a9b2a; stroke-width: 3; }
.solid { display: block; width: 30px; height: 30px; border-radius: 5px; background: #006000; }
.stroke-row { height: 69px; padding: 0 9px 2px 20px; gap: 10px; }
.number {
  display: flex;
  align-items: center;
  width: 132px;
  height: 50px;
  margin-left: auto;
  padding: 0 5px 0 13px;
  border: 1px solid var(--line);
  border-radius: 5px;
  gap: 5px;
  font-size: 18px;
  color: rgba(0, 0, 0, 0.38);
}
.number input { flex: 1; width: 0; padding: 0; border: 0; background: none; color: var(--ink); appearance: textfield; }
.number input::-webkit-inner-spin-button { appearance: none; }
.spinner { width: 19px; height: 24px; background: #efefef; fill: #444; }
.switch-row { height: 72px; margin-top: 20px; padding: 0 20px; gap: 20px; }
.switch-row input {
  position: relative;
  appearance: none;
  width: 45px;
  height: 18px;
  margin: 0;
  border-radius: 9px;
  background: #e0e0e0;
}
.switch-row input::before {
  content: "";
  position: absolute;
  left: 0;
  top: -4px;
  width: 25px;
  height: 25px;
  border-radius: 50%;
  background: linear-gradient(#fff, #fff) center / 16px 2px no-repeat #616161;
  box-shadow: 0 1px 3px rgba(0, 0, 0, 0.4);
}
.behavior-box { height: 70px; }
.dialog-foot {
  display: flex;
  align-items: center;
  justify-content: space-between;
  height: 66px;
  flex: none;
  padding: 0 10px 0 2px;
  border-radius: 0 0 5px 5px;
  background: #fff;
}
.dialog-thumb { position: absolute; right: 0; top: 296px; width: 7px; height: 253px; background: #d4d4d4; }

/* Guide note */
.leader { position: absolute; left: 880px; top: 334px; width: 60px; height: 12px; fill: var(--mark); }
.callout {
  position: absolute;
  left: 936px;
  top: 292px;
  padding: 1px 0 0 5px;
  border: 3px solid var(--mark);
  border-radius: 9px;
  background: #ffefdf;
  box-shadow: 0 0 5px 1px rgba(255, 170, 60, 0.5);
  color: #111;
  font: 28px/34px "Liberation Sans", Arial, sans-serif;
  white-space: nowrap;
  width: 253px;
  height: 109px;
}
```
